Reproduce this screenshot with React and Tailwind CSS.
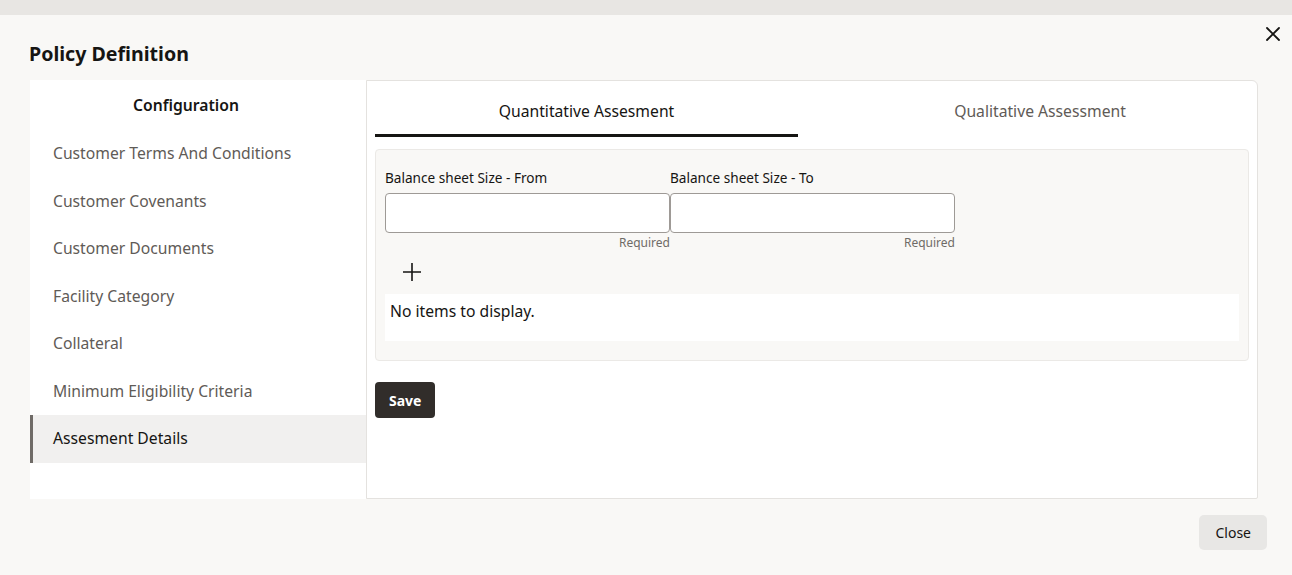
import React, { useState } from 'react';

const menuItems = [
  'Customer Terms And Conditions',
  'Customer Covenants',
  'Customer Documents',
  'Facility Category',
  'Collateral',
  'Minimum Eligibility Criteria',
  'Assesment Details',
];

const CloseIcon = () => (
  <svg width="16" height="16" viewBox="0 0 16 16" fill="none" stroke="#161513" strokeWidth="1.8" strokeLinecap="round">
    <path d="M2 2 L14 14 M14 2 L2 14" />
  </svg>
);

const PlusIcon = () => (
  <svg width="20" height="20" viewBox="0 0 20 20" fill="none" stroke="#161513" strokeWidth="1.6">
    <path d="M10 1 V19 M1 10 H19" />
  </svg>
);

const Field = ({ label }) => (
  <div className="flex flex-col w-[285px]">
    <label className="text-[13.6px] text-[#161513] leading-[20px] h-[20px]">{label}</label>
    <input
      type="text"
      className="mt-[5px] h-[40px] w-full bg-white border border-[#9e9a96] rounded-[4px] px-2 outline-none"
    />
    <span className="mt-[2px] text-right text-[12px] leading-[16px] text-[#6f6b67]">Required</span>
  </div>
);

export default function App() {
  const [selected, setSelected] = useState('Assesment Details');
  const [tab, setTab] = useState(0);

  return (
    <div className="w-[1292px] h-[575px] overflow-hidden bg-[#e9e7e4] font-['Noto_Sans',sans-serif]">
      <div className="h-[15px] bg-[#e8e6e3]" />
      <div className="h-[560px] bg-[#f9f8f6] flex flex-col">
        {/* header */}
        <div className="flex items-start justify-between pl-[29px] pr-[11px] pt-[8px] h-[65px]">
          <h1 className="mt-[18px] text-[19.6px] leading-[26px] font-bold text-[#161513]">Policy Definition</h1>
          <button className="mt-[3px] w-[16px] h-[16px]">
            <CloseIcon />
          </button>
        </div>

        {/* body */}
        <div className="flex ml-[30px] w-[1228px] h-[419px]">
          {/* left nav */}
          <div className="w-[336px] bg-white flex flex-col">
            <div className="h-[50px] flex items-center justify-center pr-[24px] pt-[2px] text-[15.7px] font-semibold text-[#161513]">
              Configuration
            </div>
            {menuItems.map((item) => {
              const active = item === selected;
              return (
                <button
                  key={item}
                  onClick={() => setSelected(item)}
                  className={
                    active
                      ? 'h-[47.5px] flex items-center text-left pl-[20px] pt-[1px] text-[15.7px] text-[#161513] bg-[#f1f0ef] border-l-[3px] border-[#6f6b67]'
                      : 'h-[47.5px] flex items-center text-left pl-[23px] pt-[1px] text-[15.7px] text-[#5f5b57]'
                  }
                >
                  {item}
                </button>
              );
            })}
          </div>

          {/* right content */}
          <div className="flex-1 bg-white border border-[#e4e2df] rounded-tr-[6px] rounded-br-[2px] px-[8px]">
            <div className="flex h-[56px]">
              <button
                onClick={() => setTab(0)}
                className={
                  tab === 0
                    ? 'w-[423px] flex items-center justify-center text-[15.7px] text-[#161513] border-b-[3px] border-[#161513] pt-[9px]'
                    : 'w-[423px] flex items-center justify-center text-[15.7px] text-[#5f5b57] border-b-[3px] border-transparent pt-[9px]'
                }
              >
                Quantitative Assesment
              </button>
              <button
                onClick={() => setTab(1)}
                className={
                  tab === 1
                    ? 'flex-1 flex items-center justify-center pl-[33px] text-[15.7px] text-[#161513] border-b-[3px] border-[#161513] pt-[9px]'
                    : 'flex-1 flex items-center justify-center pl-[33px] text-[15.7px] text-[#5f5b57] border-b-[3px] border-transparent pt-[9px]'
                }
              >
                Qualitative Assessment
              </button>
            </div>

            <div className="mt-[12px] bg-[#f9f8f6] border border-[#ebe9e6] rounded-[4px] px-[9px] pt-[18px] pb-[19px]">
              <div className="flex">
                <Field label="Balance sheet Size - From" />
                <Field label="Balance sheet Size - To" />
              </div>
              <button className="ml-[17px] mt-[11px] w-[20px] h-[20px] flex items-center justify-center">
                <PlusIcon />
              </button>
              <div className="mt-[12px] h-[47px] bg-white pl-[5px] pt-[6px] text-[15.7px] text-[#161513]">
                No items to display.
              </div>
            </div>

            <button className="mt-[21px] h-[36px] px-[14px] bg-[#312d2a] text-white text-[14px] font-bold rounded-[4px]">
              Save
            </button>
          </div>
        </div>

        {/* footer */}
        <div className="flex justify-end pr-[25px] pt-[16px]">
          <button className="h-[35px] px-[16px] bg-[#e8e7e5] rounded-[5px] text-[14px] text-[#161513]">Close</button>
        </div>
      </div>
    </div>
  );
}
